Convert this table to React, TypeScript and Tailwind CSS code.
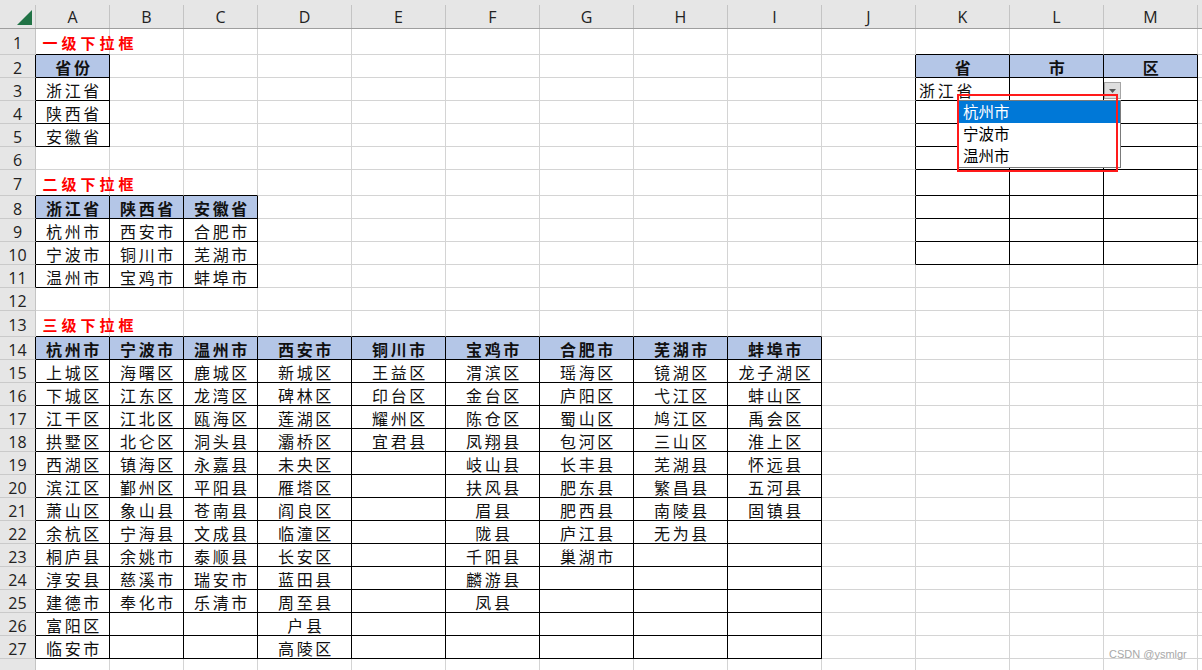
import { JSX } from "react";

const COLS = ["A", "B", "C", "D", "E", "F", "G", "H", "I", "J", "K", "L", "M", ""];
const ROWS = Array.from({ length: 28 }, (_, i) => i + 1);

const provinces = ["浙江省", "陕西省", "安徽省"];
const level2 = [
  ["杭州市", "宁波市", "温州市"],
  ["西安市", "铜川市", "宝鸡市"],
  ["合肥市", "芜湖市", "蚌埠市"],
];
const level3: [string, string[]][] = [
  ["杭州市", ["上城区", "下城区", "江干区", "拱墅区", "西湖区", "滨江区", "萧山区", "余杭区", "桐庐县", "淳安县", "建德市", "富阳区", "临安市"]],
  ["宁波市", ["海曙区", "江东区", "江北区", "北仑区", "镇海区", "鄞州区", "象山县", "宁海县", "余姚市", "慈溪市", "奉化市"]],
  ["温州市", ["鹿城区", "龙湾区", "瓯海区", "洞头县", "永嘉县", "平阳县", "苍南县", "文成县", "泰顺县", "瑞安市", "乐清市"]],
  ["西安市", ["新城区", "碑林区", "莲湖区", "灞桥区", "未央区", "雁塔区", "阎良区", "临潼区", "长安区", "蓝田县", "周至县", "户县", "高陵区"]],
  ["铜川市", ["王益区", "印台区", "耀州区", "宜君县"]],
  ["宝鸡市", ["渭滨区", "金台区", "陈仓区", "凤翔县", "岐山县", "扶风县", "眉县", "陇县", "千阳县", "麟游县", "凤县"]],
  ["合肥市", ["瑶海区", "庐阳区", "蜀山区", "包河区", "长丰县", "肥东县", "肥西县", "庐江县", "巢湖市"]],
  ["芜湖市", ["镜湖区", "弋江区", "鸠江区", "三山区", "芜湖县", "繁昌县", "南陵县", "无为县"]],
  ["蚌埠市", ["龙子湖区", "蚌山区", "禹会区", "淮上区", "怀远县", "五河县", "固镇县"]],
];
const titles: Record<number, string> = { 1: "一级下拉框", 7: "二级下拉框", 13: "三级下拉框" };

type Cell = { text: string; header?: boolean; left?: boolean };

// black-bordered ranges
function bordered(r: number, c: number): boolean {
  if (c === 0 && r >= 2 && r <= 5) return true;
  if (c >= 0 && c <= 2 && r >= 8 && r <= 11) return true;
  if (c >= 0 && c <= 8 && r >= 14 && r <= 27) return true;
  if (c >= 10 && c <= 12 && r >= 2 && r <= 10) return true;
  return false;
}

function getCell(r: number, c: number): Cell | null {
  if (r === 2 && c === 0) return { text: "省份", header: true };
  if (r >= 3 && r <= 5 && c === 0) return { text: provinces[r - 3] };
  if (r === 8 && c <= 2) return { text: provinces[c], header: true };
  if (r >= 9 && r <= 11 && c <= 2) return { text: level2[c][r - 9] };
  if (r === 14 && c <= 8) return { text: level3[c][0], header: true };
  if (r >= 15 && r <= 27 && c <= 8) {
    const t = level3[c][1][r - 15];
    return t ? { text: t } : null;
  }
  if (r === 2 && c >= 10 && c <= 12) return { text: ["省", "市", "区"][c - 10], header: true };
  if (r === 3 && c === 10) return { text: "浙江省", left: true };
  return null;
}

function ColumnHeader(): JSX.Element {
  return (
    <div className="flex h-[29px] border-b border-b-[#9e9e9e] bg-[#e6e6e6]">
      <div className="relative w-[36px] shrink-0 pt-[5px]">
        <div className="h-full border-r border-r-[#c4c4c4]" />
        <svg className="absolute left-0 top-0" width="36" height="28" viewBox="0 0 36 28">
          <polygon points="32,10 32,25 17,25" fill="#217346" />
        </svg>
      </div>
      {COLS.map((col, i) => (
        <div key={i} className={`${i < 3 ? "w-[74px]" : "w-[94px]"} shrink-0 pt-[5px]`}>
          <div className="flex h-full items-center justify-center border-r border-r-[#c4c4c4] pt-[1px] font-['Open_Sans',sans-serif] text-[16px] leading-none text-[#222]">
            {col}
          </div>
        </div>
      ))}
    </div>
  );
}

function SheetRow({ r }: { r: number }): JSX.Element {
  const tall = r === 1 || r === 7 || r === 13;
  return (
    <div className={`flex ${tall ? "h-[26px]" : "h-[23px]"}`}>
      <div
        className={`flex w-[36px] shrink-0 items-center justify-center border-b border-r border-b-[#cacaca] bg-[#e6e6e6] pt-[3px] font-['Open_Sans',sans-serif] text-[16px] leading-none text-[#222] ${
          bordered(r, 0) ? "border-r-black" : "border-r-[#c4c4c4]"
        }`}
      >
        {r < 28 ? r : ""}
      </div>
      {COLS.map((_, c) => {
        const cell = getCell(r, c);
        const rb = bordered(r, c) || bordered(r, c + 1);
        const bb = bordered(r, c) || bordered(r + 1, c);
        const title = c === 0 ? titles[r] : undefined;
        return (
          <div
            key={c}
            className={`flex shrink-0 items-center border-b border-r pt-[2px] leading-none ${c < 3 ? "w-[74px]" : "w-[94px]"} ${
              rb ? "border-r-black" : "border-r-[#d4d4d4]"
            } ${bb ? "border-b-black" : "border-b-[#d4d4d4]"} ${cell?.header ? "bg-[#b4c6e7]" : ""} ${
              cell?.left ? "justify-start pl-[3px]" : "justify-center pl-[3px]"
            }`}
          >
            {title && (
              <span className="relative z-10 -ml-[3px] w-full self-center whitespace-nowrap pl-[5px] font-['Noto_Sans_CJK_SC',sans-serif] text-[15px] font-bold tracking-[4px] text-[#ff0000]">
                {title}
              </span>
            )}
            {cell && (
              <span
                className={`whitespace-nowrap font-['Noto_Sans_CJK_SC',sans-serif] text-[16px] tracking-[2.7px] text-[#111] ${
                  cell.header ? "font-bold" : "font-normal"
                }`}
              >
                {cell.text}
              </span>
            )}
          </div>
        );
      })}
    </div>
  );
}

export default function App(): JSX.Element {
  return (
    <div className="relative h-[670px] w-[1202px] overflow-hidden bg-white">
      <div className="w-[1300px]">
        <ColumnHeader />
        {ROWS.map((r) => (
          <SheetRow key={r} r={r} />
        ))}
      </div>

      {/* dropdown arrow of active cell */}
      <div className="absolute left-[1104px] top-[82px] flex h-[17px] w-[17px] items-center justify-center border border-[#a5a5a5] bg-[#dedede]">
        <svg width="7" height="4" viewBox="0 0 7 4">
          <polygon points="0,0 7,0 3.5,4" fill="#555" />
        </svg>
      </div>

      {/* dropdown list */}
      <div className="absolute left-[958px] top-[100px] h-[68px] w-[163px] border border-[#7a7a7a] bg-white font-['Noto_Sans_CJK_SC',sans-serif] text-[15.5px] leading-none">
        <div className="flex h-[22px] items-center bg-[#0078d7] pl-[4px] text-white">杭州市</div>
        <div className="flex h-[22px] items-center pl-[4px] text-black">宁波市</div>
        <div className="flex h-[22px] items-center pl-[4px] text-black">温州市</div>
      </div>

      {/* red highlight box */}
      <div className="absolute left-[957px] top-[94px] h-[78px] w-[161px] border-2 border-[#ff1a1a]" />

      <div className="absolute left-[1109px] top-[646px] font-['Liberation_Sans',sans-serif] text-[11px] text-[#a8a8a8]">
        CSDN @ysmlgr
      </div>
    </div>
  );
}
